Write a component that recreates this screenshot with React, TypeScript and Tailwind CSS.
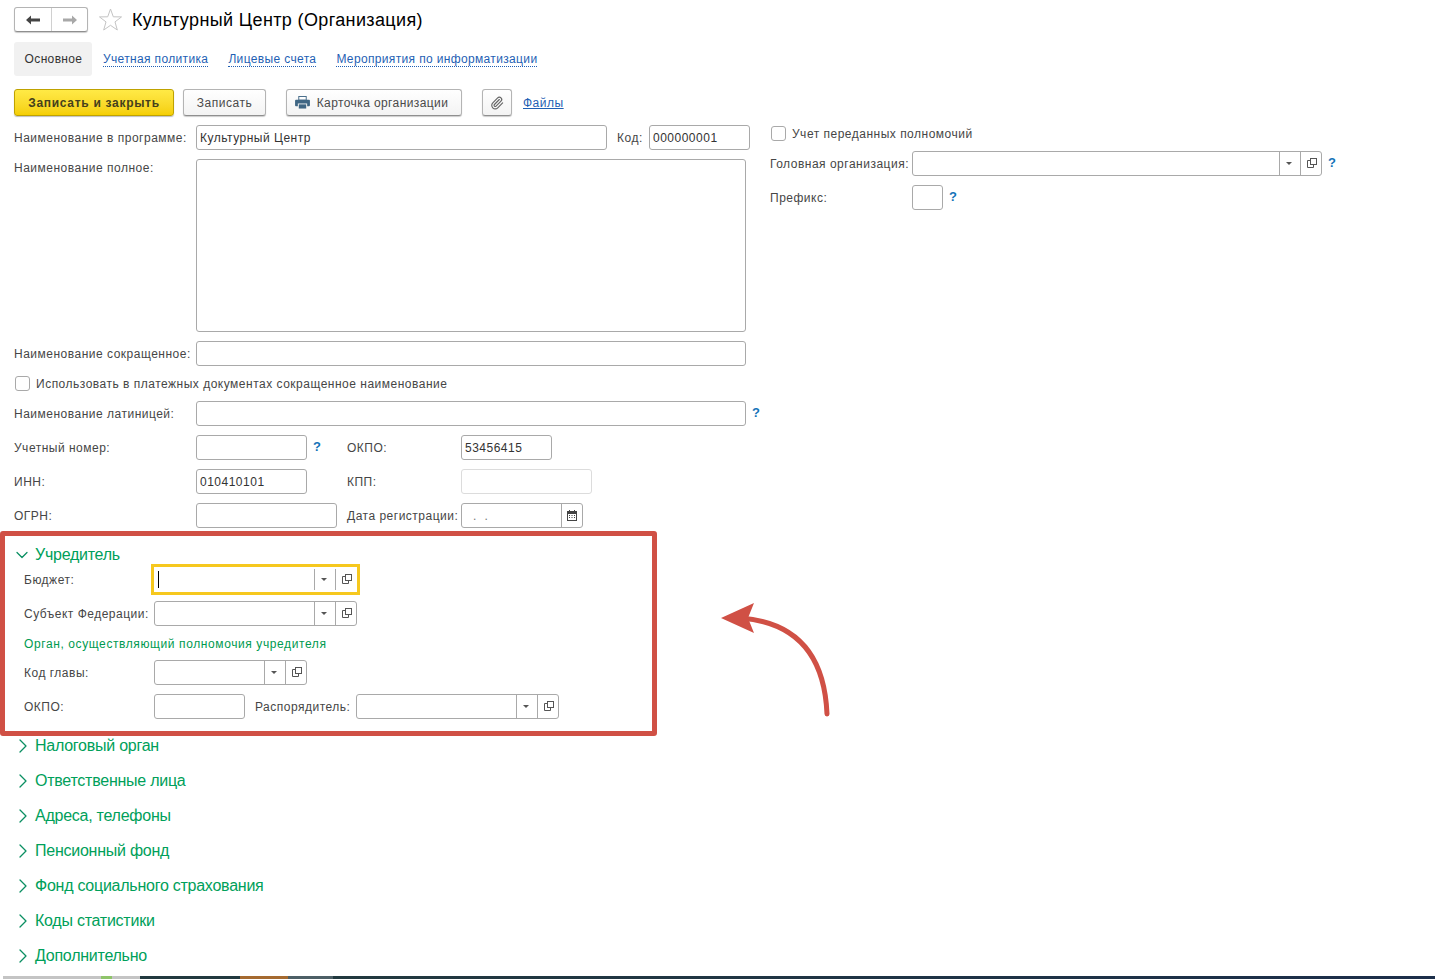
import React from "react";
import { Paperclip, ChevronDown, ChevronRight } from "lucide-react";

const OpenIcon = () => (
  <svg width="10" height="10" viewBox="0 0 10 10" fill="none" stroke="#555" strokeWidth="1" className="ml-[1px] -mt-[1px]">
    <rect x="3.5" y="0.5" width="6" height="6" />
    <path d="M3.5 2.5H0.5V9.5H6.5V6.5" />
  </svg>
);

const Combo = ({ w, bare }: { w: string; bare?: boolean }) => (
  <div className={`${w} h-[25px] flex bg-white ${bare ? "pr-[1px] py-[2px]" : "border border-[#a9a9a9] rounded-[3px]"}`}>
    <div className="flex-1" />
    <div className="w-[21px] border-l border-[#a9a9a9] flex items-center justify-center pr-[2px]">
      <div className="w-0 h-0 border-l-[3px] border-r-[3px] border-t-[3px] border-l-transparent border-r-transparent border-t-[#555]" />
    </div>
    <div className="w-[21px] border-l border-[#a9a9a9] flex items-center justify-center">
      <OpenIcon />
    </div>
  </div>
);

const Input = ({ w, value, light }: { w: string; value?: string; light?: boolean }) => (
  <div
    className={`${w} h-[25px] border rounded-[3px] px-[3px] flex items-center text-[#333] ${
      light ? "border-[#dcdcdc]" : "border-[#a9a9a9]"
    }`}
  >
    {value}
  </div>
);

const Help = ({ className }: { className: string }) => (
  <span className={`text-[#1473b8] font-bold text-[13px] leading-[13px] mb-[2px] ${className}`}>?</span>
);

const Check = () => <div className="w-[15px] h-[15px] border border-[#a9a9a9] rounded-[3px] shrink-0" />;

const Label = ({ w, children }: { w: string; children: React.ReactNode }) => (
  <div className={`${w} shrink-0 whitespace-nowrap`}>{children}</div>
);

const Btn = ({ className, children }: { className: string; children: React.ReactNode }) => (
  <button
    className={`h-[27px] border border-[#b4b4b4] border-b-[#8f8f8f] rounded-[3px] bg-gradient-to-b from-white to-[#f3f3f3] shadow-[0_1px_1px_rgba(0,0,0,0.2)] flex items-center justify-center text-[#4a4a4a] ${className}`}
  >
    {children}
  </button>
);

const Printer = () => (
  <svg width="15" height="13" viewBox="0 0 16 14">
    <rect x="4" y="0.5" width="8" height="4" fill="#fff" stroke="#3f6684" />
    <path d="M1 4h14a1 1 0 0 1 1 1v5a1 1 0 0 1-1 1h-2V8H3v3H1a1 1 0 0 1-1-1V5a1 1 0 0 1 1-1z" fill="#3f6684" />
    <rect x="4" y="9" width="8" height="4.5" fill="#3f6684" />
  </svg>
);

const Calendar = () => (
  <svg width="10" height="11" viewBox="0 0 10 11">
    <rect x="0.5" y="1.5" width="9" height="9" fill="#fff" stroke="#444" />
    <rect x="0" y="1" width="10" height="3" fill="#444" />
    <rect x="2" y="0" width="1" height="2" fill="#444" />
    <rect x="7" y="0" width="1" height="2" fill="#444" />
    <path d="M2 5.5h1M4.5 5.5h1M7 5.5h1M2 7.5h1M4.5 7.5h1M7 7.5h1" stroke="#444" />
  </svg>
);

const sections = [
  "Налоговый орган",
  "Ответственные лица",
  "Адреса, телефоны",
  "Пенсионный фонд",
  "Фонд социального страхования",
  "Коды статистики",
  "Дополнительно",
];

export default function App() {
  return (
    <div className="relative h-[979px] w-[1435px] overflow-hidden bg-white flex flex-col font-['Liberation_Sans',Arial,sans-serif] text-[12px] tracking-[0.5px] text-[#464646]">
      {/* title */}
      <div className="h-[32px] pt-[7px] pl-[14px] flex items-start shrink-0">
        <div className="w-[74px] h-[25px] border border-[#b4b4b4] border-b-[#8f8f8f] rounded-[3px] shadow-[0_1px_1px_rgba(0,0,0,0.2)] flex">
          <div className="w-[37px] border-r border-[#d0d0d0] flex items-center justify-center">
            <svg width="14" height="10" viewBox="0 0 14 10"><path d="M0 5l5-4.5v3h9v3H5v3z" fill="#444" /></svg>
          </div>
          <div className="flex-1 flex items-center justify-center">
            <svg width="14" height="10" viewBox="0 0 14 10"><path d="M14 5L9 .5v3H0v3h9v3z" fill="#a8a8a8" /></svg>
          </div>
        </div>
        <svg className="ml-[10px] mt-[1px] shrink-0" width="25" height="23" viewBox="0 0 25 23" fill="none" stroke="#c4c4c4" strokeWidth="1">
          <path d="M12.5 1L15.3 8.8L23.5 8.9L17 13.9L19.3 22L12.5 17.3L5.7 22L8 13.9L1.5 8.9L9.7 8.8Z" />
        </svg>
        <div className="ml-[9px] text-[18px] leading-[26px] tracking-[0.37px] text-black whitespace-nowrap">Культурный Центр (Организация)</div>
      </div>

      {/* tabs */}
      <div className="h-[34px] mt-[10px] ml-[14px] flex items-center shrink-0 tracking-[0.35px]">
        <div className="w-[78px] h-[34px] bg-[#f1f1f1] rounded-[3px] flex items-center justify-center text-[#333] pl-[1px]">Основное</div>
        <a className="ml-[11px] mt-[2px] text-[#1f5fb4] border-b border-dotted border-[#1f5fb4] leading-[13px]">Учетная политика</a>
        <a className="ml-[20px] mt-[2px] text-[#1f5fb4] border-b border-dotted border-[#1f5fb4] leading-[13px]">Лицевые счета</a>
        <a className="ml-[20px] mt-[2px] text-[#1f5fb4] border-b border-dotted border-[#1f5fb4] leading-[13px]">Мероприятия по информатизации</a>
      </div>

      {/* command bar */}
      <div className="h-[27px] mt-[13px] ml-[14px] flex items-center shrink-0">
        <button className="w-[160px] h-[27px] rounded-[3px] border border-[#bfa200] bg-gradient-to-b from-[#ffea45] to-[#f5cf00] shadow-[0_1px_1px_rgba(0,0,0,0.25)] font-bold tracking-[0.7px] text-[#45401c] flex items-center justify-center">
          Записать и закрыть
        </button>
        <Btn className="w-[83px] ml-[9px]">Записать</Btn>
        <Btn className="w-[176px] ml-[20px] gap-[7px] tracking-[0.4px] pr-[5px]">
          <Printer />
          Карточка организации
        </Btn>
        <Btn className="w-[30px] ml-[20px]">
          <Paperclip size={14} color="#666" />
        </Btn>
        <a className="ml-[11px] text-[#1f5fb4] underline">Файлы</a>
      </div>

      {/* body */}
      <div className="flex mt-[9px] shrink-0">
        <div className="w-[770px] shrink-0 flex flex-col">
          <div className="pl-[14px] flex items-center">
            <Label w="w-[182px]">Наименование в программе:</Label>
            <Input w="w-[411px]" value="Культурный Центр" />
            <Label w="w-[32px] ml-[10px]">Код:</Label>
            <Input w="w-[101px]" value="000000001" />
          </div>
          <div className="pl-[14px] flex items-start mt-[9px]">
            <Label w="w-[182px]">Наименование полное:</Label>
            <div className="w-[550px] h-[173px] border border-[#a9a9a9] rounded-[3px]" />
          </div>
          <div className="pl-[14px] flex items-center mt-[9px]">
            <Label w="w-[182px]">Наименование сокращенное:</Label>
            <Input w="w-[550px]" />
          </div>
          <div className="pl-[15px] flex items-center gap-[6px] mt-[10px] h-[15px]">
            <Check />
            <span>Использовать в платежных документах сокращенное наименование</span>
          </div>
          <div className="pl-[14px] flex items-center mt-[10px]">
            <Label w="w-[182px]">Наименование латиницей:</Label>
            <Input w="w-[550px]" />
            <Help className="ml-[6px]" />
          </div>
          <div className="pl-[14px] flex items-center mt-[9px]">
            <Label w="w-[182px]">Учетный номер:</Label>
            <Input w="w-[111px]" />
            <Help className="ml-[6px] w-[34px]" />
            <Label w="w-[114px]">ОКПО:</Label>
            <Input w="w-[91px]" value="53456415" />
          </div>
          <div className="pl-[14px] flex items-center mt-[9px]">
            <Label w="w-[182px]">ИНН:</Label>
            <Input w="w-[111px]" value="010410101" />
            <Label w="w-[114px] ml-[40px]">КПП:</Label>
            <Input w="w-[131px]" light />
          </div>
          <div className="pl-[14px] flex items-center mt-[9px]">
            <Label w="w-[182px]">ОГРН:</Label>
            <Input w="w-[141px]" />
            <Label w="w-[114px] ml-[10px]">Дата регистрации:</Label>
            <div className="w-[122px] h-[25px] border border-[#a9a9a9] rounded-[3px] flex">
              <div className="flex-1 pl-[11px] flex items-center text-[#777]">. &nbsp;.</div>
              <div className="w-[21px] border-l border-[#a9a9a9] flex items-center justify-center">
                <Calendar />
              </div>
            </div>
          </div>

          {/* highlighted group */}
          <div className="w-[657px] h-[205px] mt-[3px] border-[5px] border-[#d05045] rounded-[3px] pl-[19px] flex flex-col">
            <div className="-ml-[12px] mt-[9px] h-[20px] flex items-center gap-[3px] text-[16px] tracking-[-0.25px] text-[#00a05a]">
              <ChevronDown size={20} strokeWidth={1.5} color="#0a8f62" />
              <span>Учредитель</span>
            </div>
            <div className="flex items-center mt-[2px] h-[25px]">
              <Label w="w-[127px]">Бюджет:</Label>
              <div className="border-[3px] border-[#f6c81e] -my-[3px]">
                <div className="relative w-[203px] h-[25px]">
                  <Combo w="w-[203px]" bare />
                  <div className="absolute left-[4px] top-[4px] w-px h-[17px] bg-black" />
                </div>
              </div>
            </div>
            <div className="flex items-center mt-[9px]">
              <Label w="w-[130px]">Субъект Федерации:</Label>
              <Combo w="w-[203px]" />
            </div>
            <div className="mt-[11px] h-[14px] leading-[14px] tracking-[0.6px] text-[#009a50]">Орган, осуществляющий полномочия учредителя</div>
            <div className="flex items-center mt-[9px]">
              <Label w="w-[130px]">Код главы:</Label>
              <Combo w="w-[153px]" />
            </div>
            <div className="flex items-center mt-[9px]">
              <Label w="w-[130px]">ОКПО:</Label>
              <Input w="w-[91px]" />
              <Label w="w-[101px] ml-[10px]">Распорядитель:</Label>
              <Combo w="w-[203px]" />
            </div>
          </div>

          {/* collapsed groups */}
          <div className="flex flex-col gap-[15px] -mt-[1px] pt-[1px]">
            {sections.map((s) => (
              <div key={s} className="pl-[11px] h-[20px] flex items-center text-[16px] tracking-[-0.25px] text-[#00a05a] whitespace-nowrap">
                <ChevronRight size={24} strokeWidth={1.3} color="#0a8f62" className="-my-[2px]" />
                <span>{s}</span>
              </div>
            ))}
          </div>
        </div>

        {/* right column */}
        <div className="flex flex-col">
          <div className="flex items-center h-[15px] mt-[1px] gap-[6px] pl-[1px]">
            <Check />
            <span>Учет переданных полномочий</span>
          </div>
          <div className="flex items-center mt-[10px]">
            <Label w="w-[142px]">Головная организация:</Label>
            <Combo w="w-[410px]" />
            <Help className="ml-[6px]" />
          </div>
          <div className="flex items-center mt-[9px]">
            <Label w="w-[142px]">Префикс:</Label>
            <Input w="w-[31px]" />
            <Help className="ml-[6px]" />
          </div>
        </div>
      </div>

      {/* taskbar strip */}
      <div className="mt-auto h-[3px] flex shrink-0">
        <div className="w-[98px] ml-[3px] bg-[#c4c4c4]" />
        <div className="w-[11px] bg-[#8fc46a]" />
        <div className="w-[28px] bg-[#c4c4c4]" />
        <div className="w-[100px] bg-[#22393f]" />
        <div className="w-[48px] bg-[#a56a30]" />
        <div className="w-[45px] bg-[#4d5f66]" />
        <div className="flex-1 bg-gradient-to-r from-[#22393f] to-[#1c2e4a]" />
      </div>

      {/* annotation arrow */}
      <svg className="absolute left-[715px] top-[595px]" width="125" height="125" viewBox="0 0 125 125" fill="none">
        <path d="M112 119C110 70 90 28 26 23" stroke="#d05045" strokeWidth="5" strokeLinecap="round" />
        <path d="M6 23L39 8L33 23L39 38Z" fill="#d05045" />
      </svg>
    </div>
  );
}
